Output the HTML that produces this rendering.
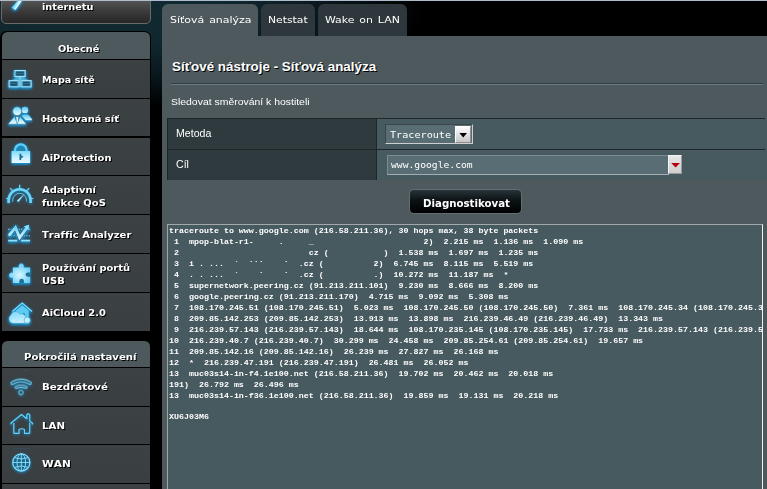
<!DOCTYPE html>
<html lang="cs">
<head>
<meta charset="utf-8">
<title>Síťové nástroje - Síťová analýza</title>
<style>
*{box-sizing:border-box;margin:0;padding:0}
html,body{width:767px;height:489px;overflow:hidden}
body{position:relative;background:#000;font-family:"Liberation Sans",Arial,sans-serif;color:#fff}
#bg{position:absolute;left:0;top:0;width:767px;height:489px;background:radial-gradient(ellipse 330px 100px at 95px 8px,#112a32 0%,#10272f 40%,#0a1a20 65%,#000 100%),#000}
.secbg{position:absolute;left:0;width:151px;background:#000;border-radius:6.5px 6.5px 0 0}
#topline{position:absolute;left:0;top:0;width:767px;height:1px;background:#aebccb}
.abs{position:absolute}
#topitem{position:absolute;left:1.3px;top:-1px;width:149.9px;height:24.5px;border:1px solid #6a6a6a;border-radius:0 0 5px 5px;background:linear-gradient(#565656,#3a3a3a 50%,#272727)}
.sech{position:absolute;left:2px;width:148.3px;background:#4d595d;border-radius:5.5px 5.5px 0 0}
.mi{position:absolute;left:2px;width:148.3px;height:37.65px;background:linear-gradient(#3c4144,#393e41)}
.mt{position:absolute;left:42.3px;font:bold 9.3px "DejaVu Sans","Liberation Sans",sans-serif;color:#fff;text-shadow:1px 1px 0 #000;white-space:nowrap;line-height:13px;transform:scaleX(1.065);transform-origin:0 0;font-variant-ligatures:none;font-kerning:none}
.ic{position:absolute;overflow:visible}
.tab{position:absolute;top:4px;height:32.5px;border-radius:6px 6px 0 0;background:#2e383c;font:11px "DejaVu Sans","Liberation Sans",sans-serif;color:#fff;white-space:nowrap}
.tab span{position:absolute;top:8.98px;line-height:13px;font-size:9.3px;word-spacing:1.2px;transform:scaleX(1.16);transform-origin:0 0}
#panel{position:absolute;left:162px;top:36px;width:605px;height:453px;background:#4d595d}
#title{position:absolute;left:172px;top:58.7px;font:bold 13.4px "Liberation Sans",Arial,sans-serif;line-height:16px;text-shadow:1px 1px 0 #000;white-space:nowrap}
#hr{position:absolute;left:171px;top:83.2px;width:592px;height:1.8px;background:linear-gradient(#333e41 0%,#333e41 50%,#6a7c83 50%,#6a7c83 100%)}
#desc{position:absolute;left:171.3px;top:94.7px;font:9.9px "Liberation Sans",Arial,sans-serif;line-height:13px;white-space:nowrap;transform:scaleX(1.056);transform-origin:0 0}
#tbl{position:absolute;left:167px;top:117.7px;width:598.2px;height:62.7px;background:#1f2628}
.th{position:absolute;left:1px;width:208.4px;background:#2f3a3e}
.td{position:absolute;left:209.9px;width:391px;background:#475a5f}
.lbl{position:absolute;left:8.1px;font:10px "Liberation Sans",Arial,sans-serif;line-height:12px;white-space:nowrap;transform:scaleX(1.058);transform-origin:0 0}
#sel{position:absolute;left:385px;top:124px;width:88px;height:20px;background:#596e74;border:1px solid;border-color:#3b474b #cfcfcf #cfcfcf #3b474b}
#sel span{position:absolute;left:3.5px;top:3.7px;font:9.5px "DejaVu Sans Mono","Liberation Mono",monospace;line-height:12px;white-space:nowrap;transform:scaleX(1.068);transform-origin:0 0}
#selbtn{position:absolute;right:0.6px;top:0.5px;width:16.2px;height:17px;background:linear-gradient(#fdfdfd,#c6c6c6);border:1px solid;border-color:#fff #8c8c8c #8c8c8c #fff}
#inp{position:absolute;left:386.5px;top:154.7px;width:282px;height:20px;background:#596e74;border:1px solid;border-color:#7d8a8e #a3aeb0 #a3aeb0 #7d8a8e}
#inp span{position:absolute;left:3px;top:3.1px;font:9.2px "DejaVu Sans Mono","Liberation Mono",monospace;line-height:12px;white-space:nowrap;transform:scaleX(1.054);transform-origin:0 0}
#inpbtn{position:absolute;left:668px;top:155px;width:13.5px;height:19px;background:linear-gradient(#e6e6e6,#cfcfcf);border:1px solid;border-color:#f4f4f4 #9a9a9a #9a9a9a #f4f4f4}
#btn{position:absolute;left:408.6px;top:189.3px;width:113.8px;height:25.2px;border-radius:4.5px;border:0.8px solid #626e72;background:linear-gradient(#27343a 0%,#0c1215 45%,#000 100%);text-align:center}
#btn span{position:absolute;left:13.4px;top:7.58px;font:bold 9.6px "DejaVu Sans","Liberation Sans",sans-serif;line-height:12px;color:#fff;white-space:nowrap;transform:scaleX(1.065);transform-origin:0 0}
#ta{position:absolute;left:167px;top:224px;width:595.6px;height:280px;background:#475a5f;border:1px solid;border-color:#a3a9ab #f2f2f2 #f2f2f2 #9ea6a8;overflow:hidden}
#ta pre{position:absolute;left:1.4px;top:1.0px;font:bold 8.05px "Liberation Mono","DejaVu Sans Mono",monospace;line-height:10.97px;color:#fff;white-space:pre;transform:scaleX(1.0335);transform-origin:0 0}
</style>
</head>
<body>
<svg width="0" height="0" style="position:absolute"><defs>
<filter id="glow" x="-40%" y="-40%" width="180%" height="190%" color-interpolation-filters="sRGB">
<feGaussianBlur in="SourceAlpha" stdDeviation="19" result="b"/>
<feOffset in="b" dy="11" result="o"/>
<feFlood flood-color="#139be0" flood-opacity="0.95"/><feComposite in2="o" operator="in" result="g"/>
<feGaussianBlur in="SourceAlpha" stdDeviation="7" result="b2"/>
<feFlood flood-color="#1a86bd" flood-opacity="0.9"/><feComposite in2="b2" operator="in" result="g2"/>
<feMerge><feMergeNode in="g"/><feMergeNode in="g"/><feMergeNode in="g2"/><feMergeNode in="SourceGraphic"/></feMerge>
</filter>
<filter id="glow2" x="-40%" y="-40%" width="180%" height="190%" color-interpolation-filters="sRGB">
<feGaussianBlur in="SourceAlpha" stdDeviation="20" result="b"/>
<feOffset in="b" dy="8" result="o"/>
<feFlood flood-color="#139be0" flood-opacity="0.8"/><feComposite in2="o" operator="in" result="g"/>
<feGaussianBlur in="SourceAlpha" stdDeviation="8" result="b2"/>
<feFlood flood-color="#1a86bd" flood-opacity="0.8"/><feComposite in2="b2" operator="in" result="g2"/>
<feMerge><feMergeNode in="g"/><feMergeNode in="g2"/><feMergeNode in="SourceGraphic"/></feMerge>
</filter>
<linearGradient id="gv" x1="0" y1="0" x2="0" y2="1"><stop offset="0" stop-color="#4fc6f4"/><stop offset="1" stop-color="#d4f5ff"/></linearGradient>
<linearGradient id="gv2" x1="0" y1="0" x2="0" y2="1"><stop offset="0" stop-color="#62cff8"/><stop offset="0.55" stop-color="#b9ecff"/><stop offset="1" stop-color="#e9faff"/></linearGradient>
<linearGradient id="gc" x1="0" y1="0" x2="0.3" y2="1"><stop offset="0" stop-color="#7ad7f8"/><stop offset="1" stop-color="#c6f0ff"/></linearGradient>
<linearGradient id="gl" x1="0" y1="0" x2="0" y2="1"><stop offset="0" stop-color="#7bd9fa"/><stop offset="0.5" stop-color="#c4efff"/><stop offset="1" stop-color="#ecfbff"/></linearGradient>
<linearGradient id="gw" gradientUnits="userSpaceOnUse" x1="160" y1="50" x2="208" y2="78"><stop offset="0" stop-color="#33c1f5"/><stop offset="0.75" stop-color="#d9f7ff"/><stop offset="1" stop-color="#ffffff"/></linearGradient>
<linearGradient id="gt" gradientUnits="userSpaceOnUse" x1="0" y1="135" x2="0" y2="320"><stop offset="0" stop-color="#5fcdf7"/><stop offset="0.6" stop-color="#a8e8ff"/><stop offset="1" stop-color="#e4f9ff"/></linearGradient>
<radialGradient id="gr" cx="0.5" cy="0.6" r="0.6"><stop offset="0" stop-color="#d8f6ff"/><stop offset="1" stop-color="#62cdf6"/></radialGradient>
</defs></svg>
<div id="bg"></div>
<div id="topitem"></div>
<svg class="ic" style="left:0;top:0px" width="44" height="42" viewBox="0 0 512 489"><g filter="url(#glow)"><polygon points="133,90 180,116 262,0 214,0" fill="url(#gw)"/></g></svg>
<div class="mt" style="top:0.48px;transform:scaleX(1.0473)">internetu</div>
<div class="secbg" style="top:30.9px;height:299.71px"></div>
<div class="sech" style="top:32.0px;height:26.80px"></div>
<div class="mt" style="left:57.6px;top:41.88px;transform:scaleX(1.0505)">Obecné</div>
<div class="mi" style="top:60.00px"></div>
<svg class="ic" style="left:0;top:58px" width="44" height="42" viewBox="0 0 512 489"><g filter="url(#glow)"><polygon points="196,222 268,222 330,258 140,258" fill="#6fc6e6" opacity="0.6"/><rect x="226" y="222" width="14" height="120" fill="#8fdcf7" opacity="0.8"/><rect x="165" y="140" width="133" height="82" fill="#b9f0ff"/><rect x="176" y="151" width="111" height="60" fill="#3a8fb6"/><rect x="186" y="159" width="91" height="44" fill="#1e4f6a"/><rect x="191" y="178.0" width="81" height="6" fill="#3f93b8"/><rect x="100" y="258" width="122" height="84" fill="#b9f0ff"/><rect x="111" y="269" width="100" height="62" fill="#3a8fb6"/><rect x="121" y="277" width="80" height="46" fill="#1e4f6a"/><rect x="126" y="297.0" width="70" height="6" fill="#3f93b8"/><rect x="245" y="258" width="123" height="84" fill="#b9f0ff"/><rect x="256" y="269" width="101" height="62" fill="#3a8fb6"/><rect x="266" y="277" width="81" height="46" fill="#1e4f6a"/><rect x="271" y="297.0" width="71" height="6" fill="#3f93b8"/></g></svg>
<div class="mt" style="top:72.98px;transform:scaleX(1.0301)">Mapa sítě</div>
<div class="mi" style="top:98.83px"></div>
<svg class="ic" style="left:0;top:97px" width="44" height="42" viewBox="0 0 512 489"><g filter="url(#glow)"><circle cx="290" cy="150" r="37" fill="url(#gv)"/><path d="M250 218 C280 198 320 200 338 214 L372 258 Q376 272 360 272 L300 272 Z" fill="url(#gv)"/><circle cx="200" cy="165" r="52" fill="url(#gv2)" stroke="#35424a" stroke-width="5"/><path d="M93 316 L168 226 Q200 214 234 226 L308 316 Z" fill="url(#gv2)" stroke="#35424a" stroke-width="4"/><path d="M166 224 L236 224 L204 314 L198 314 Z" fill="#2a7fa8"/><path d="M189 234 L213 234 L209 286 L201 302 L193 286 Z" fill="#d4f5ff"/></g></svg>
<div class="mt" style="top:111.81px;transform:scaleX(1.0656)">Hostovaná síť</div>
<div class="mi" style="top:137.66px"></div>
<svg class="ic" style="left:0;top:136px" width="44" height="42" viewBox="0 0 512 489"><g filter="url(#glow)"><path d="M174 185 V166 A68 68 0 0 1 310 166 V185" fill="none" stroke="#5ecdf7" stroke-width="26"/><path d="M198 178 V168 A44 44 0 0 1 286 168 V178 Z" fill="#2a85ad" opacity="0.7"/><rect x="135" y="175" width="215" height="140" rx="5" fill="url(#gl)"/><rect x="227" y="206" width="19" height="74" fill="#1d6a90"/><path d="M246 222 L273 242 L246 262 Z" fill="#1d6a90"/></g></svg>
<div class="mt" style="top:150.64px;transform:scaleX(1.0677)">AiProtection</div>
<div class="mi" style="top:176.49px"></div>
<svg class="ic" style="left:0;top:174px" width="44" height="42" viewBox="0 0 512 489"><g filter="url(#glow2)"><path d="M100 338 V305 A128 128 0 0 1 356 305 V338" fill="none" stroke="#6dd5fa" stroke-width="30"/><path d="M148 322 V305 A80 80 0 0 1 308 305 V322" fill="none" stroke="#6dd5fa" stroke-width="9"/><path d="M228 125 V170 M118 165 L150 200 M340 165 L306 200 M72 285 H100 M388 285 H356" stroke="#6dd5fa" stroke-width="14" fill="none"/><path d="M196 310 L214 327 L290 228 Z" fill="#a9eaff"/></g></svg>
<div class="mt" style="top:183.07px;transform:scaleX(1.0731)">Adaptivní<br>funkce QoS</div>
<div class="mi" style="top:215.32px"></div>
<svg class="ic" style="left:0;top:213px" width="44" height="42" viewBox="0 0 512 489"><g filter="url(#glow)"><path d="M95 190 H350 M95 265 H350" stroke="#5cc4ec" stroke-width="13" stroke-dasharray="16 14" fill="none"/><path d="M95 322 H200 M246 322 H350" stroke="#8fe2fd" stroke-width="20" fill="none"/><path d="M104 262 L180 170 L228 286 L314 172" fill="none" stroke="#33434c" stroke-width="46" stroke-linejoin="miter"/><path d="M104 262 L180 170 L228 286 L314 172" fill="none" stroke="url(#gt)" stroke-width="35" stroke-linejoin="miter"/><path d="M278 158 L338 136 L332 200 Z" fill="#8fe2fd"/></g></svg>
<div class="mt" style="top:228.30px;transform:scaleX(1.0785)">Traffic Analyzer</div>
<div class="mi" style="top:254.15px"></div>
<svg class="ic" style="left:0;top:252px" width="44" height="42" viewBox="0 0 512 489"><g filter="url(#glow)"><path d="M150 180 H222 A30 30 0 1 1 274 180 H350 V238 A27 27 0 1 0 350 288 V360 H280 A29 29 0 1 0 224 360 H150 V296 A30 30 0 1 1 150 244 Z" fill="url(#gr)"/><circle cx="322" cy="263" r="24" fill="#1f6f96"/><circle cx="252" cy="338" r="26" fill="#1f6f96"/></g></svg>
<div class="mt" style="top:260.73px;transform:scaleX(1.0677)">Používání portů<br>USB</div>
<div class="mi" style="top:292.98px"></div>
<svg class="ic" style="left:0;top:291px" width="44" height="42" viewBox="0 0 512 489"><g filter="url(#glow)"><polygon points="185,228 258,166 335,228 335,305 185,305" fill="#5ecbf3"/><path d="M144 238 L258 141 L372 238" fill="none" stroke="#7adcff" stroke-width="15"/><circle cx="276" cy="272" r="14" fill="#1f6f96"/><path d="M152 376 A54 54 0 0 1 128 278 A56 56 0 0 1 232 270 A46 46 0 0 1 298 304 L330 376 Z" fill="url(#gc)" stroke="#3f9fc9" stroke-width="5"/><circle cx="316" cy="340" r="36" fill="#c3efff" stroke="#3f9fc9" stroke-width="7"/></g></svg>
<div class="mt" style="top:305.96px;transform:scaleX(1.0677)">AiCloud 2.0</div>
<div class="secbg" style="top:339.59999999999997px;height:160px"></div>
<div class="sech" style="top:340.7px;height:26.00px"></div>
<div class="mt" style="left:23.6px;top:350.08px;transform:scaleX(1.0914)">Pokročilá nastavení</div>
<div class="mi" style="top:367.90px"></div>
<svg class="ic" style="left:0;top:366px" width="44" height="42" viewBox="0 0 512 489"><g filter="url(#glow2)"><path d="M142 198 A190 190 0 0 1 348 198" fill="none" stroke="#8fe3ff" stroke-width="39" stroke-linecap="round"/><path d="M142 198 A190 190 0 0 1 348 198" fill="none" stroke="#2a5266" stroke-width="20" stroke-linecap="round"/><path d="M188 246 A148 148 0 0 1 302 246" fill="none" stroke="#8fe3ff" stroke-width="33" stroke-linecap="round"/><path d="M188 246 A148 148 0 0 1 302 246" fill="none" stroke="#2a5266" stroke-width="14" stroke-linecap="round"/><circle cx="243" cy="308" r="25" fill="#2a5266" stroke="#8fe3ff" stroke-width="10"/><path d="M262 52 H340" stroke="#2f7fa6" stroke-width="6" opacity="0.22"/></g></svg>
<div class="mt" style="top:379.98px;transform:scaleX(1.1075)">Bezdrátové</div>
<div class="mi" style="top:406.65px"></div>
<svg class="ic" style="left:0;top:405px" width="44" height="42" viewBox="0 0 512 489"><g filter="url(#glow2)"><path d="M133 225 L126 212 L250 110 L312 160 V116 Q312 104 329 104 Q346 104 346 116 V186 L381 214 L372 226 M160 210 V322 Q160 331 170 331 H221 V292 Q221 276 253 276 Q285 276 285 292 V331 H336 Q346 331 346 322 V208" fill="none" stroke="#63d0f8" stroke-width="13" stroke-linejoin="round"/></g></svg>
<div class="mt" style="top:418.73px;transform:scaleX(1.1022)">LAN</div>
<div class="mi" style="top:445.40px"></div>
<svg class="ic" style="left:0;top:444px" width="44" height="42" viewBox="0 0 512 489"><g filter="url(#glow2)"><circle cx="248" cy="215" r="100" fill="#1f5873" fill-opacity="0.7" stroke="#86defb" stroke-width="14"/><ellipse cx="248" cy="215" rx="50" ry="100" fill="none" stroke="#86defb" stroke-width="11"/><path d="M248 115 V315 M148 215 H348 M166 158 Q248 192 330 158 M166 272 Q248 238 330 272" fill="none" stroke="#86defb" stroke-width="11"/><path d="M150 52 H350" stroke="#2f7fa6" stroke-width="6" opacity="0.18"/></g></svg>
<div class="mt" style="top:457.48px;transform:scaleX(1.1398)">WAN</div>
<div class="mi" style="top:484.15px"></div>

<div class="tab" style="left:162px;width:96px;background:#4d595d;height:40px"><span style="left:7.6px;transform:scaleX(1.18)">Síťová analýza</span></div>
<div class="tab" style="left:261px;width:54.2px"><span style="left:6.6px">Netstat</span></div>
<div class="tab" style="left:318.2px;width:88.4px"><span style="left:7.1px;transform:scaleX(1.175)">Wake on LAN</span></div>
<div id="panel"></div>
<div id="title">Síťové nástroje - Síťová analýza</div>
<div id="hr"></div>
<div id="desc">Sledovat směrování k hostiteli</div>
<div id="tbl">
  <div class="th" style="top:1px;height:30.5px"><span class="lbl" style="top:9.5px">Metoda</span></div>
  <div class="td" style="top:1px;height:30.5px"></div>
  <div class="th" style="top:32.3px;height:30.5px"><span class="lbl" style="top:8.7px">Cíl</span></div>
  <div class="td" style="top:32.3px;height:30.5px"></div>
</div>
<div id="sel"><span>Traceroute</span><div id="selbtn"><svg width="14" height="14" viewBox="0 0 14 14" style="position:absolute;left:0;top:0"><path d="M3.4 6h7.6L7.2 10.4z" fill="#000"/></svg></div></div>
<div id="inp"><span>www.google.com</span></div>
<div id="inpbtn"><svg width="12" height="17" viewBox="0 0 12 17" style="position:absolute;left:0;top:0"><path d="M2.2 7h8.8L6.6 11.6z" fill="#b4000f"/></svg></div>
<div id="btn"><span>Diagnostikovat</span></div>

<div id="ta"><pre>traceroute to www.google.com (216.58.211.36), 30 hops max, 38 byte packets
 1  mpop-blat-r1-     .     _                      2)  2.215 ms  1.136 ms  1.090 ms
 2                          cz (           )  1.538 ms  1.697 ms  1.235 ms
 3  i . ...  ˙  ˙˙˙    ˙  .cz (          2)  6.745 ms  8.115 ms  5.519 ms
 4  . . ...  ˙    ˙    ˙  .cz (          .)  10.272 ms  11.187 ms  *
 5  supernetwork.peering.cz (91.213.211.101)  9.230 ms  8.666 ms  8.200 ms
 6  google.peering.cz (91.213.211.170)  4.715 ms  9.092 ms  5.308 ms
 7  108.170.245.51 (108.170.245.51)  5.023 ms  108.170.245.50 (108.170.245.50)  7.361 ms  108.170.245.34 (108.170.245.34)  7.512 ms
 8  209.85.142.253 (209.85.142.253)  13.913 ms  13.898 ms  216.239.46.49 (216.239.46.49)  13.343 ms
 9  216.239.57.143 (216.239.57.143)  18.644 ms  108.170.235.145 (108.170.235.145)  17.733 ms  216.239.57.143 (216.239.57.143)  18.021 ms
10  216.239.40.7 (216.239.40.7)  30.299 ms  24.458 ms  209.85.254.61 (209.85.254.61)  19.657 ms
11  209.85.142.16 (209.85.142.16)  26.239 ms  27.827 ms  26.168 ms
12  *  216.239.47.191 (216.239.47.191)  26.481 ms  26.052 ms
13  muc03s14-in-f4.1e100.net (216.58.211.36)  19.702 ms  20.462 ms  20.018 ms
191)  26.792 ms  26.496 ms
13  muc03s14-in-f36.1e100.net (216.58.211.36)  19.859 ms  19.131 ms  20.218 ms

XU6J03M6</pre></div>
<div id="topline"></div>
</body>
</html>
